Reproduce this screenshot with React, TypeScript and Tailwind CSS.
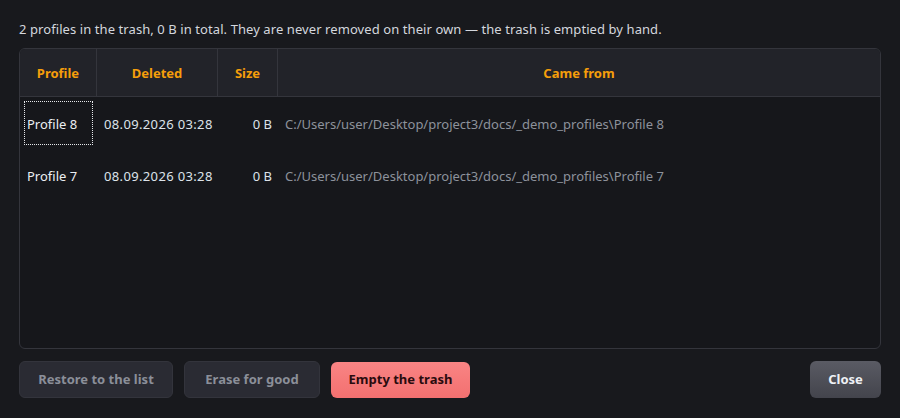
import React from "react";

const rows = [
  {
    name: "Profile 8",
    deleted: "08.09.2026 03:28",
    size: "0 B",
    from: "C:/Users/user/Desktop/project3/docs/_demo_profiles\\Profile 8",
  },
  {
    name: "Profile 7",
    deleted: "08.09.2026 03:28",
    size: "0 B",
    from: "C:/Users/user/Desktop/project3/docs/_demo_profiles\\Profile 7",
  },
];

export default function App() {
  return (
    <div
      className="w-[900px] h-[418px] bg-[#18191d] flex flex-col px-[19px] pt-[20px] pb-[20px] text-[13px] text-[#d4d7dd]"
      style={{ fontFamily: '"Noto Sans", "Open Sans", sans-serif' }}
    >
      <p className="h-[18px] leading-[18px] mb-[10px] tracking-[0.08px]">
        2 profiles in the trash, 0 B in total. They are never removed on their own — the trash is emptied by hand.
      </p>

      <div className="flex-1 border border-[#34353c] rounded-[6px] bg-[#16171b] overflow-hidden">
        <div className="grid grid-cols-[77px_121px_60px_1fr] h-[48px] bg-[#222329] border-b border-[#34353c] font-bold text-[#f59e0b]">
          <div className="flex items-center justify-center pt-[2px] border-r border-[#34353c]">Profile</div>
          <div className="flex items-center justify-center pt-[2px] border-r border-[#34353c]">Deleted</div>
          <div className="flex items-center justify-center pt-[2px] border-r border-[#34353c]">Size</div>
          <div className="flex items-center justify-center pt-[2px]">Came from</div>
        </div>
        {rows.map((r, i) => (
          <div key={r.name} className="grid grid-cols-[77px_121px_60px_1fr] h-[52px]">
            <div className="flex items-center p-[4px]">
              <div
                className={
                  "flex items-center h-full w-full pl-[2px] pt-[4px] text-[#eceef2] " +
                  (i === 0 ? "border border-dotted border-[#e5e7eb]" : "border border-transparent")
                }
              >
                {r.name}
              </div>
            </div>
            <div className="flex items-center pl-[7px] pt-[4px] text-[#dde3ea] tracking-[0.35px]">{r.deleted}</div>
            <div className="flex items-center justify-end pr-[6px] pt-[4px] text-[#dde3ea]">{r.size}</div>
            <div className="flex items-center pl-[7px] pt-[4px] text-[#8d929b] whitespace-nowrap">{r.from}</div>
          </div>
        ))}
      </div>

      <div className="flex items-center mt-[12px] h-[37px] gap-[11px] font-bold">
        <button className="h-full w-[154px] rounded-[6px] bg-[#2a2b33] border border-[#33343c] text-[#8b8f99]">
          Restore to the list
        </button>
        <button className="h-full w-[136px] rounded-[6px] bg-[#2a2b33] border border-[#33343c] text-[#8b8f99]">
          Erase for good
        </button>
        <button className="h-[36px] w-[139px] rounded-[6px] bg-gradient-to-b from-[#f98484] to-[#f37070] text-[#2a0b0e]">
          Empty the trash
        </button>
        <div className="flex-1" />
        <button className="h-full w-[71px] rounded-[6px] bg-gradient-to-b from-[#5a5b64] to-[#43444c] text-[#eef1f5]">
          Close
        </button>
      </div>
    </div>
  );
}
